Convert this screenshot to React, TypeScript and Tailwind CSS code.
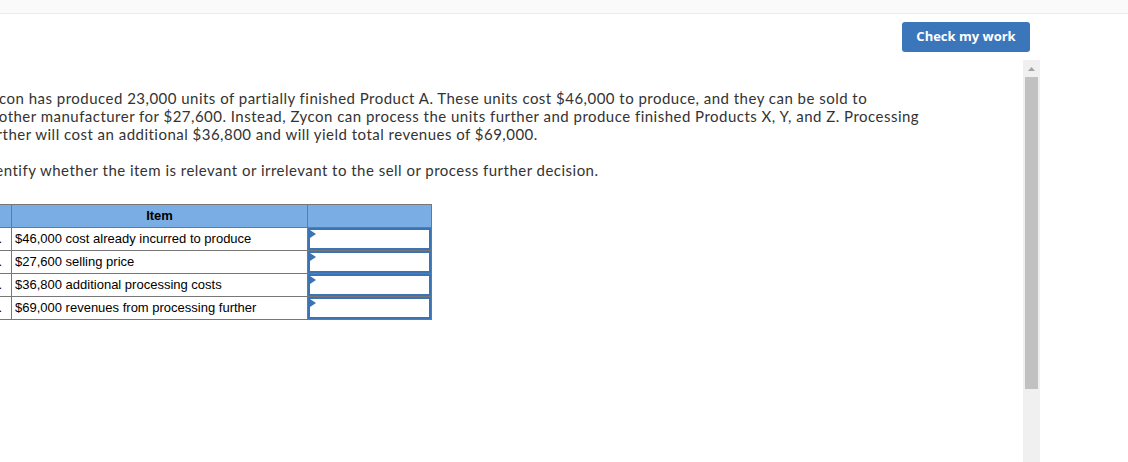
export default function App() {
  const rows = [
    { n: '1.', text: '$46,000 cost already incurred to produce' },
    { n: '2.', text: '$27,600 selling price' },
    { n: '3.', text: '$36,800 additional processing costs' },
    { n: '4.', text: '$69,000 revenues from processing further' },
  ];

  return (
    <div className="w-[1128px] h-[462px] overflow-hidden bg-white flex flex-col">
      <div className="h-[14px] bg-[#fafafa] border-b border-[#ebebeb] shrink-0" />
      <div className="flex justify-end pr-[98px] pt-[8px] pb-[8px] shrink-0">
        <button className="w-[128px] h-[30px] rounded-[3px] bg-[#3b76ba] text-white text-[13px] font-bold font-['Open_Sans',sans-serif]">
          Check my work
        </button>
      </div>
      <div className="flex flex-1 min-h-0">
        <div className="flex-1 overflow-hidden">
          <div className="-ml-[18px] pt-[29px] text-[15px] leading-[18px] tracking-[0.48px] text-[#333] font-['Lato',sans-serif]">
            <p className="whitespace-nowrap">
              Zycon has produced 23,000 units of partially finished Product A. These units cost $46,000 to produce, and they can be sold to
              <br />
              another manufacturer for $27,600. Instead, Zycon can process the units further and produce finished Products X, Y, and Z. Processing
              <br />
              further will cost an additional $36,800 and will yield total revenues of $69,000.
            </p>
            <p className="mt-[18px] whitespace-nowrap">
              Identify whether the item is relevant or irrelevant to the sell or process further decision.
            </p>
          </div>
          <table className="mt-[25px] -ml-[20px] border-collapse font-['Liberation_Sans',Arial,sans-serif] text-[13px] text-black">
            <thead>
              <tr className="bg-[#7aade4] h-[23px]">
                <th className="border border-[#777] w-[31px]" />
                <th className="border border-[#777] w-[296px] font-bold text-center">Item</th>
                <th className="border border-[#777] w-[124px]" />
              </tr>
            </thead>
            <tbody>
              {rows.map((r) => (
                <tr key={r.n} className="h-[23px]">
                  <td className="border border-[#777] text-right pr-[9px]">{r.n}</td>
                  <td className="border border-[#777] pl-[3px]">{r.text}</td>
                  <td className="border border-[#777] p-0">
                    <div className="relative h-[22px] border-2 border-[#3c73b5] bg-white">
                      <svg className="absolute left-0 top-0" width="6" height="8" viewBox="0 0 6 8">
                        <path d="M0 0 L6 4 L0 8 Z" fill="#3c73b5" />
                      </svg>
                    </div>
                  </td>
                </tr>
              ))}
            </tbody>
          </table>
        </div>
        <div className="w-[17px] mr-[88px] bg-[#f0f0f0] flex flex-col items-center shrink-0">
          <svg className="mt-[7px]" width="7" height="4" viewBox="0 0 7 4">
            <path d="M3.5 0 L7 4 L0 4 Z" fill="#a3a3a3" />
          </svg>
          <div className="mt-[6px] w-[13px] h-[312px] bg-[#c1c1c1]" />
        </div>
      </div>
    </div>
  );
}
